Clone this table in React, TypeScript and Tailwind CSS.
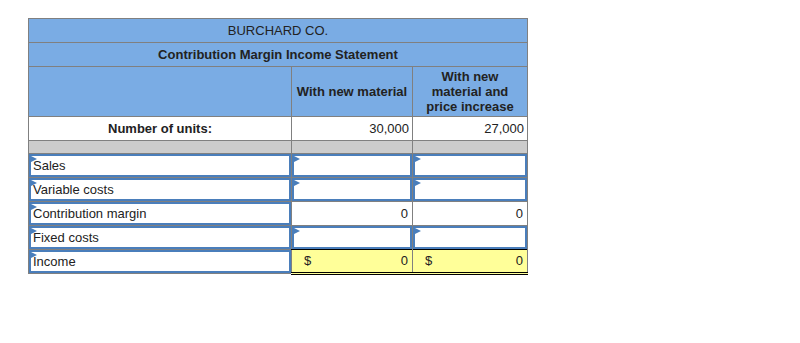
import React from "react";

const Flag = () => (
  <svg
    width="6"
    height="6"
    viewBox="0 0 6 6"
    className="absolute left-0 top-0"
  >
    <polygon points="0,0 6,3 0,6" fill="#4a7ebb" />
  </svg>
);

const InputCell = ({ text, align = "left" }: { text?: string; align?: "left" | "right" }) => (
  <td className="border border-[#808080] p-0 bg-white">
    <div
      className={`relative h-[23px] border-2 border-[#4a7ebb] bg-white px-[2px] leading-[20px] ${
        align === "right" ? "text-right" : "text-left"
      }`}
    >
      <Flag />
      {text}
    </div>
  </td>
);

const rows = [
  { label: "Sales", type: "input" },
  { label: "Variable costs", type: "input" },
  { label: "Contribution margin", type: "total" },
  { label: "Fixed costs", type: "input" },
  { label: "Income", type: "final" },
];

export default function App() {
  return (
    <div
      className="w-[800px] h-[343px] bg-white pt-[18px] pl-[28px] text-[13px] text-[#222]"
      style={{ fontFamily: '"Liberation Sans", Arial, sans-serif' }}
    >
      <table className="w-[499px] table-fixed border-collapse border border-[#808080]">
        <colgroup>
          <col className="w-[263px]" />
          <col className="w-[121px]" />
          <col className="w-[115px]" />
        </colgroup>
        <tbody>
          <tr className="h-[24px] bg-[#7aace4]">
            <td colSpan={3} className="border border-[#808080] text-center">
              BURCHARD CO.
            </td>
          </tr>
          <tr className="h-[24px] bg-[#7aace4]">
            <td colSpan={3} className="border border-[#808080] text-center font-bold">
              Contribution Margin Income Statement
            </td>
          </tr>
          <tr className="h-[50px] bg-[#7aace4] font-bold">
            <td className="border border-[#808080]"></td>
            <td className="border border-[#808080] text-center">With new material</td>
            <td className="border border-[#808080] text-center leading-[15px]">
              With new
              <br />
              material and
              <br />
              price increase
            </td>
          </tr>
          <tr className="h-[24px] bg-white">
            <td className="border border-[#808080] text-center font-bold">Number of units:</td>
            <td className="border border-[#808080] text-right pr-[3px]">30,000</td>
            <td className="border border-[#808080] text-right pr-[3px]">27,000</td>
          </tr>
          <tr className="h-[13px] bg-[#cccccc]">
            <td className="border border-[#808080]"></td>
            <td className="border border-[#808080]"></td>
            <td className="border border-[#808080]"></td>
          </tr>
          {rows.map((r) => (
            <tr key={r.label} className="h-[24px]">
              <InputCell text={r.label} />
              {r.type === "input" && (
                <>
                  <InputCell />
                  <InputCell />
                </>
              )}
              {r.type === "total" && (
                <>
                  <td className="border border-[#808080] border-t-black bg-white text-right pr-[4px]">0</td>
                  <td className="border border-[#808080] border-t-black bg-white text-right pr-[4px]">0</td>
                </>
              )}
              {r.type === "final" && (
                <>
                  <td className="border border-[#808080] border-t-black border-b-[3px] border-b-black border-double bg-[#ffff99] pr-[4px]">
                    <div className="flex justify-between pl-[12px]">
                      <span>$</span>
                      <span>0</span>
                    </div>
                  </td>
                  <td className="border border-[#808080] border-t-black border-b-[3px] border-b-black border-double bg-[#ffff99] pr-[4px]">
                    <div className="flex justify-between pl-[12px]">
                      <span>$</span>
                      <span>0</span>
                    </div>
                  </td>
                </>
              )}
            </tr>
          ))}
        </tbody>
      </table>
    </div>
  );
}
